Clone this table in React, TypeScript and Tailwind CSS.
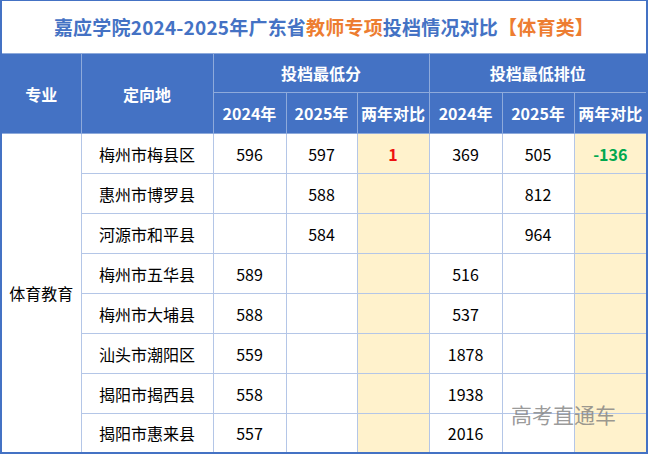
import React from 'react'

type Row = {
    place: string
    s24?: string
    s25?: string
    sDiff?: string
    r24?: string
    r25?: string
    rDiff?: string
}

const rows: Row[] = [
    { place: '梅州市梅县区', s24: '596', s25: '597', sDiff: '1', r24: '369', r25: '505', rDiff: '-136' },
    { place: '惠州市博罗县', s25: '588', r25: '812' },
    { place: '河源市和平县', s25: '584', r25: '964' },
    { place: '梅州市五华县', s24: '589', r24: '516' },
    { place: '梅州市大埔县', s24: '588', r24: '537' },
    { place: '汕头市潮阳区', s24: '559', r24: '1878' },
    { place: '揭阳市揭西县', s24: '558', r24: '1938' },
    { place: '揭阳市惠来县', s24: '557', r24: '2016' },
]

const font = { fontFamily: '"Noto Sans CJK SC", "Noto Sans", sans-serif' }

export default function App() {
    const th = 'border border-[#8eaadb] text-white font-bold text-[16px] text-center'
    const td = 'border border-[#b4c6e7] text-[16px] text-center'

    return (
        <div
            className="relative w-[648px] h-[454px] bg-white border-[#4472c4] border-t border-x-2 border-b-2 overflow-hidden"
            style={font}
        >
            <div className="h-[52px] flex items-center justify-center text-[19px] font-bold text-[#4472c4] tracking-[0.2px]">
                <span>嘉应学院2024-2025年广东省</span>
                <span className="text-[#ed7d31]">教师专项</span>
                <span>投档情况对比</span>
                <span className="text-[#ed7d31]">【体育类】</span>
            </div>
            <table className="table-fixed border-collapse w-[644px]">
                <colgroup>
                    <col className="w-[79px]" />
                    <col className="w-[132px]" />
                    <col className="w-[73px]" />
                    <col className="w-[71px]" />
                    <col className="w-[72px]" />
                    <col className="w-[73px]" />
                    <col className="w-[72px]" />
                    <col className="w-[72px]" />
                </colgroup>
                <thead className="bg-[#4472c4]">
                    <tr className="h-[39px]">
                        <th rowSpan={2} className={`${th} border-l-0`}>专业</th>
                        <th rowSpan={2} className={th}>定向地</th>
                        <th colSpan={3} className={th}>投档最低分</th>
                        <th colSpan={3} className={`${th} border-r-0`}>投档最低排位</th>
                    </tr>
                    <tr className="h-[41px]">
                        <th className={th}>2024年</th>
                        <th className={th}>2025年</th>
                        <th className={th}>两年对比</th>
                        <th className={th}>2024年</th>
                        <th className={th}>2025年</th>
                        <th className={`${th} border-r-0`}>两年对比</th>
                    </tr>
                </thead>
                <tbody className="text-black">
                    {rows.map((r, i) => {
                        const last = i === rows.length - 1 ? 'border-b-0' : ''
                        return (
                            <tr key={r.place} className={i === rows.length - 1 ? 'h-[39px]' : 'h-[40px]'}>
                                {i === 0 && (
                                    <td rowSpan={rows.length} className={`${td} border-l-0 border-b-0`}>体育教育</td>
                                )}
                                <td className={`${td} ${last}`}>{r.place}</td>
                                <td className={`${td} ${last}`}>{r.s24}</td>
                                <td className={`${td} ${last}`}>{r.s25}</td>
                                <td className={`${td} bg-[#fff2cc] font-bold text-[#ee1111] ${last}`}>{r.sDiff}</td>
                                <td className={`${td} ${last}`}>{r.r24}</td>
                                <td className={`${td} ${last}`}>{r.r25}</td>
                                <td className={`${td} bg-[#fff2cc] font-bold text-[#00a84f] border-r-0 ${last}`}>{r.rDiff}</td>
                            </tr>
                        )
                    })}
                </tbody>
            </table>
            <div className="absolute left-[509px] top-[398px] text-[21px] text-[#7f7f7f]/80 pointer-events-none">
                高考直通车
            </div>
        </div>
    )
}
